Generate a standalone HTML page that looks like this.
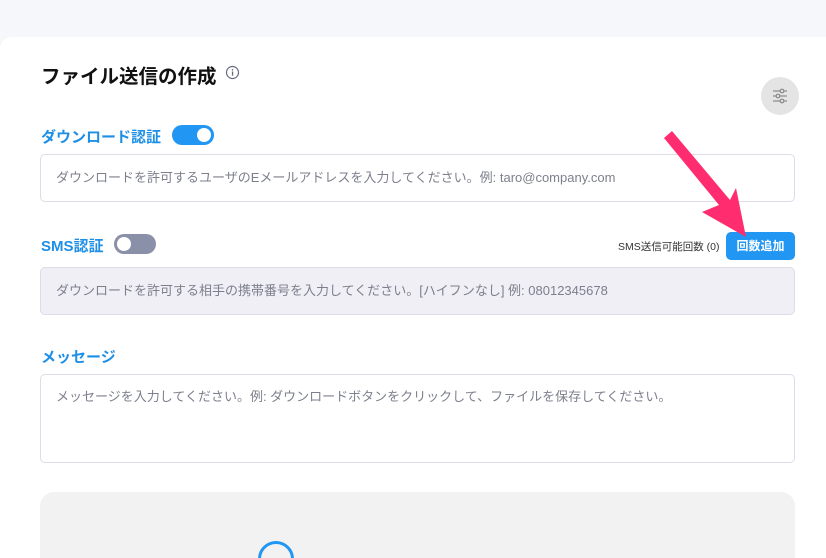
<!DOCTYPE html><html><head><meta charset="utf-8"><style>
html,body{margin:0;width:826px;height:558px;overflow:hidden}
body{background:#f6f7fb;font-family:"Liberation Sans","Noto Sans CJK JP",sans-serif;position:relative}
.card{position:absolute;left:0;top:37px;width:826px;height:521px;background:#fff;border-top-left-radius:12px;overflow:hidden}
.a{position:absolute}
.lbl{color:#1e8fe6;font-weight:bold;font-size:15px}
.tg{position:absolute;width:42px;height:20px;border-radius:10px}
.tg i{position:absolute;top:3px;width:14px;height:14px;border-radius:50%;background:#fff}
.in{position:absolute;left:40px;width:755px;border:1px solid #dcdde8;border-radius:5px;font-size:13px;color:#7d7f8c;box-sizing:border-box;padding-left:15px}
</style></head><body>
<div class="card"><div class="a" style="left:40px;top:455px;width:755px;height:66px;background:#f2f2f2;border-radius:14px 14px 0 0;overflow:hidden"><div class="a" style="left:218px;top:49px;width:36px;height:36px;border-radius:50%;border:3px solid #2196f3;box-sizing:border-box"></div></div></div>
<div class="a" style="left:41px;top:60px;font-size:19.5px;font-weight:bold;color:#111">ファイル送信の作成</div>
<svg class="a" style="left:225px;top:65px" width="15" height="15"><circle cx="7.5" cy="7.5" r="6" fill="none" stroke="#666c80" stroke-width="1.2"/><rect x="6.9" y="6.5" width="1.3" height="4.2" fill="#666c80"/><circle cx="7.5" cy="4.8" r=".8" fill="#666c80"/></svg>
<div class="a" style="left:761px;top:77px;width:38px;height:38px;border-radius:50%;background:#e4e4e4"></div>
<svg class="a" style="left:770px;top:86px" width="20" height="20" stroke="#888" stroke-width="1.2" fill="none"><line x1="3" y1="5" x2="17" y2="5"/><line x1="3" y1="10" x2="17" y2="10"/><line x1="3" y1="15" x2="17" y2="15"/><circle cx="12" cy="5" r="1.8" fill="#e4e4e4"/><circle cx="8" cy="10" r="1.8" fill="#e4e4e4"/><circle cx="12" cy="15" r="1.8" fill="#e4e4e4"/></svg>
<div class="a lbl" style="left:41px;top:126px">ダウンロード認証</div>
<div class="tg" style="left:172px;top:125px;background:#2196f3"><i style="left:25px"></i></div>
<div class="in" style="top:154px;height:48px;line-height:46px">ダウンロードを許可するユーザのEメールアドレスを入力してください。例: taro@company.com</div>
<div class="a lbl" style="left:41px;top:235px">SMS認証</div>
<div class="tg" style="left:114px;top:234px;background:#8a90a8"><i style="left:3px"></i></div>
<div class="a" style="left:618px;top:239px;font-size:10.5px;color:#333">SMS送信可能回数 (0)</div>
<div class="a" style="left:726px;top:232px;width:69px;height:28px;border-radius:5px;background:#2196f3;color:#fff;font-size:12px;font-weight:bold;text-align:center;line-height:28px">回数追加</div>
<div class="in" style="top:267px;height:48px;line-height:46px;background:#efeff5">ダウンロードを許可する相手の携帯番号を入力してください。[ハイフンなし] 例: 08012345678</div>
<div class="a lbl" style="left:41px;top:346px">メッセージ</div>
<div class="in" style="top:374px;height:89px;padding-top:13px;line-height:18px">メッセージを入力してください。例: ダウンロードボタンをクリックして、ファイルを保存してください。</div>
<svg class="a" style="left:0;top:0" width="826" height="558"><polygon points="664,138 672,131 730,200 736,188 746,237 702,212 719,205" fill="#ff2d6f"/></svg>
</body></html>
